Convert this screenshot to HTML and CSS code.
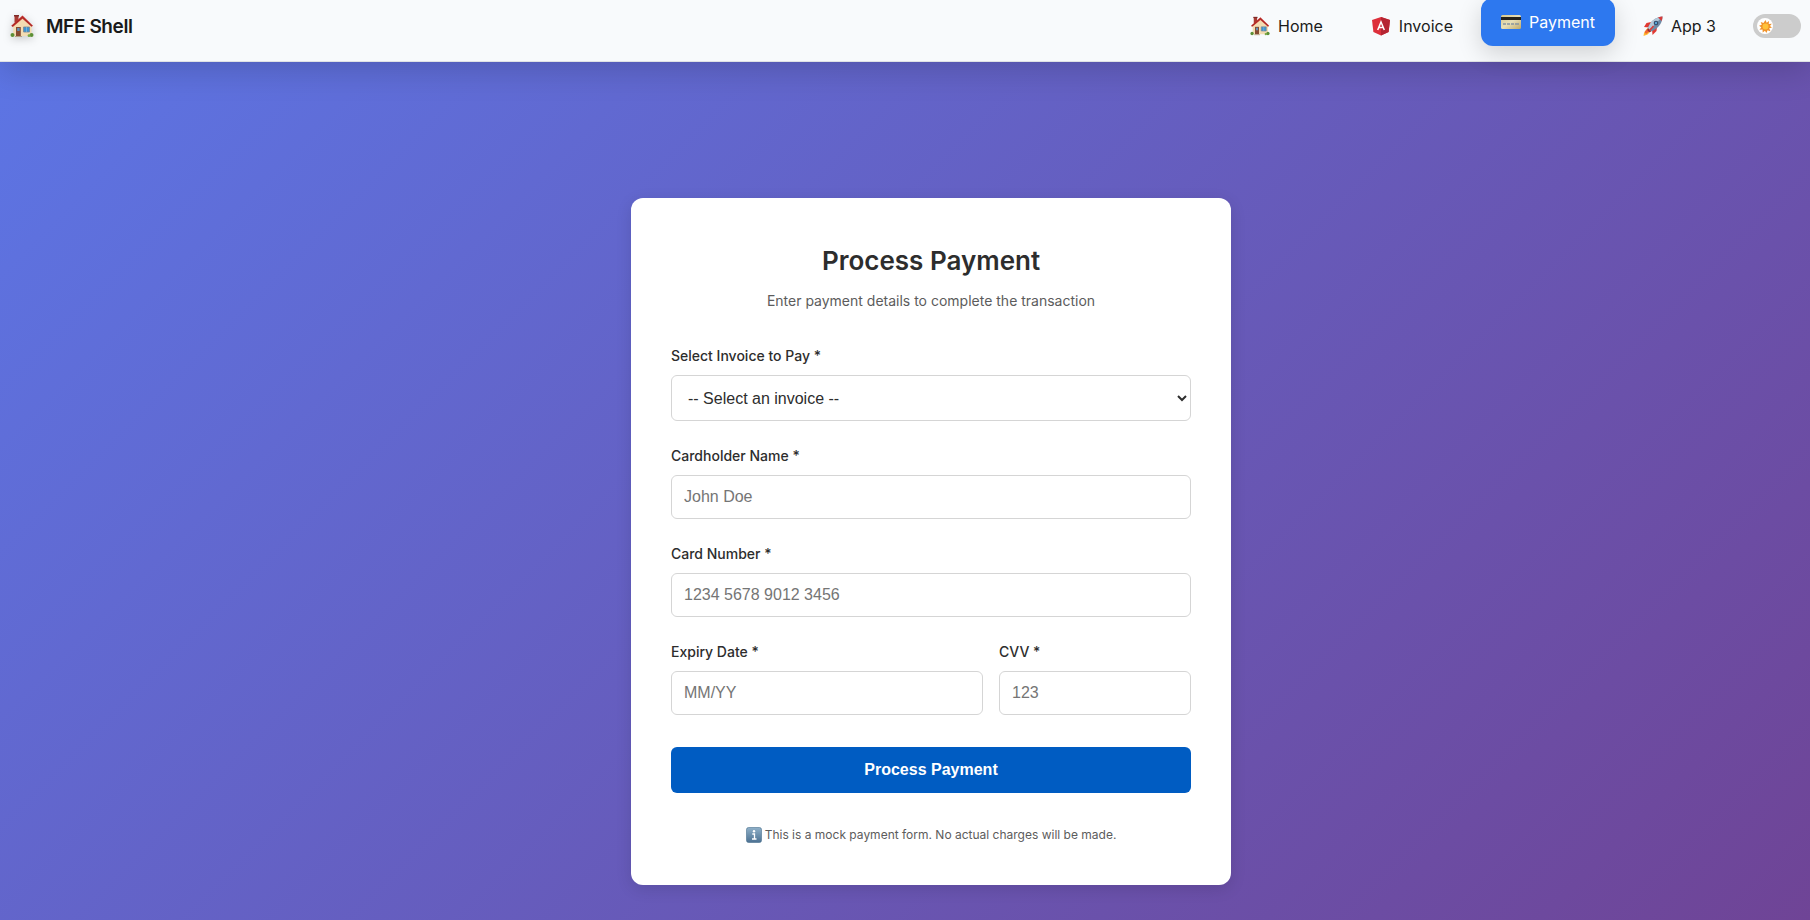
FILE: index.html
```html
<!DOCTYPE html>
<html lang="en">
<head>
<meta charset="utf-8">
<meta name="viewport" content="width=device-width, initial-scale=1">
<title>MFE Shell</title>
<link rel="stylesheet" href="styles.css">
</head>
<body>
<svg class="defs" aria-hidden="true">
  <defs>
    <linearGradient id="steel" x1="0" y1="0" x2="0" y2="1"><stop offset="0" stop-color="#8fb0c8"/><stop offset="1" stop-color="#4c7192"/></linearGradient>
    <linearGradient id="gold" x1="0" y1="0" x2="1" y2="1"><stop offset="0" stop-color="#d8c88c"/><stop offset=".5" stop-color="#e8dfb8"/><stop offset="1" stop-color="#bfa968"/></linearGradient>
    <symbol id="house" viewBox="0 0 24 24">
      <path d="M4.500 1.500h4v7h-4z" fill="#a83a32"/><path d="M4 1h5v1.500H4z" fill="#7f2a28"/>
      <path d="M3.200 11.500 12.500 3l9 8.500V22H3.200z" fill="#f3dcb2"/>
      <path d="M1.200 11.800 12.500 1.500 23 11.800l-1.500 1L12.500 4.700 2.800 13z" fill="#c9302c"/>
      <path d="M2 12.200 12.500 3.200l9.500 9" fill="none" stroke="#7d2723" stroke-width=".6"/>
      <path d="M6 13h4.800v9H6z" fill="#864b32"/><path d="M7.200 14h2.400v3H7.200z" fill="#5f8fb8"/>
      <path d="M13.500 13h6v5h-6z" fill="#3c94d2" stroke="#7b8790" stroke-width=".8"/>
      <path d="M16.500 13v5" stroke="#a9cce3" stroke-width=".5"/>
      <path d="M5 22h7v1H5z" fill="#b3a183"/>
      <circle cx="2.500" cy="21" r="2" fill="#5c8f35"/><circle cx="21.500" cy="21" r="2" fill="#5c8f35"/><circle cx="19" cy="21.700" r="1.400" fill="#78a845"/>
    </symbol>
  </defs>
</svg>
<header class="topbar">
  <a class="brand" href="#"><svg class="brand-icon" aria-hidden="true"><use href="#house"/></svg>MFE Shell</a>
  <nav class="nav" aria-label="Main">
    <a class="nav-link" href="#"><svg class="nav-icon" aria-hidden="true"><use href="#house"/></svg>Home</a>
    <a class="nav-link" href="#">
      <svg class="nav-icon" viewBox="0 0 20 20" aria-hidden="true"><path d="M10 1 19 4l-1.400 12L10 19.500 2.400 16 1 4z" fill="#dd2f3b"/><path d="M10 1 19 4l-1.400 12L10 19.500z" fill="#b52532"/><path d="M6.700 14 10 6l3.300 8M7.900 11.500h4.200" fill="none" stroke="#fff" stroke-width="1.500"/></svg>Invoice</a>
    <a class="nav-link active" href="#" aria-current="page">
      <svg class="nav-icon" viewBox="0 0 20 20" aria-hidden="true"><rect y="3" width="20" height="14" rx="1.500" fill="url(#gold)"/><path d="M0 5h20v3H0z" fill="#25221c"/><path d="M2 12h3m1 0h3m1 0h3m1 0h4" stroke="#8895a0" stroke-width="1.500"/></svg>Payment</a>
    <a class="nav-link" href="#">
      <svg class="nav-icon" viewBox="0 0 20 20" aria-hidden="true"><path d="M4.500 12 1 17l-.5 3 4-1.500L8 15z" fill="#ffb72f"/><path d="M4 13 1.500 16 3 18l4-3z" fill="#f2662e"/><path d="m8 6-4.500 1L1 11l5 .5z" fill="#e13932"/><path d="m14 11-.5 4L9.500 19 9 13.500z" fill="#e13932"/><path d="M5 12C7 6 12 1 19.500.500 19.500 8 14 13.500 8 15.500z" fill="#6f8aa5"/><path d="M5 12C7 6 12 1 19.500.500L6.500 14z" fill="#b5c8d8"/><path d="M15 1.500c1.500-.6 3-.9 4.500-1 0 1.500-.3 3-.9 4.500z" fill="#d63b3a"/><circle cx="13" cy="7" r="2.300" fill="#344a67"/><circle cx="13" cy="7" r="1.200" fill="#5ba5d7"/><path d="m5 12 3.300 3.500-2 .7-2.200-2.300z" fill="#922d37"/><path d="m6.500 14.500 4-4.500" stroke="#e13932" stroke-width="1.500"/></svg>App 3</a>
    <label class="theme">
      <input class="theme-input" type="checkbox" aria-label="Dark theme">
      <span class="theme-knob"><svg class="sun" viewBox="0 0 14 14" aria-hidden="true"><path d="m7 0 1.300 3 2.500-2-.3 3.200 3.300-.2-2 2.500L14 8l-3 1 1.300 3-3.100-.9L8 14l-1.600-2.500L4 13.500l-.2-3.200-3.300.2 2-2.600L0 6.200l3-1L1.800 2.200l3 .9z" fill="#f0922a"/><circle cx="7" cy="7" r="3.200" fill="#ffc23a"/></svg></span>
    </label>
  </nav>
</header>
<main class="page">
  <section class="card">
    <h1 class="title">Process Payment</h1>
    <p class="subtitle">Enter payment details to complete the transaction</p>
    <form class="form">
      <div class="field"><label class="label" for="invoice">Select Invoice to Pay *</label><select class="control select" id="invoice"><option>-- Select an invoice --</option></select></div>
      <div class="field"><label class="label" for="holder">Cardholder Name *</label><input class="control" id="holder" type="text" placeholder="John Doe"></div>
      <div class="field"><label class="label" for="number">Card Number *</label><input class="control" id="number" type="text" placeholder="1234 5678 9012 3456"></div>
      <div class="row">
        <div class="field wide"><label class="label" for="expiry">Expiry Date *</label><input class="control" id="expiry" type="text" placeholder="MM/YY"></div>
        <div class="field"><label class="label" for="cvv">CVV *</label><input class="control" id="cvv" type="text" placeholder="123"></div>
      </div>
      <button class="submit" type="button">Process Payment</button>
    </form>
    <p class="note"><svg class="info" viewBox="0 0 16 16" aria-hidden="true"><rect x=".5" y=".5" width="15" height="15" rx="2" fill="url(#steel)" stroke="#48708f" stroke-width=".6"/><circle cx="8" cy="4.200" r="1.200" fill="#fff"/><path d="M6.300 7H8.500v5M6 12h4.500" fill="none" stroke="#fff" stroke-width="1.300"/></svg>This is a mock payment form. No actual charges will be made.</p>
  </section>
</main>
</body>
</html>
```
FILE: styles.css
```css
* { box-sizing: border-box; }
body {
  margin: 0;
  min-height: 100vh;
  display: flex;
  flex-direction: column;
  font-family: Inter, "Liberation Sans", sans-serif;
  color: #1a1a1a;
  background: linear-gradient(135deg, #5c76e6 0%, #6f4496 100%);
}
.defs { position: absolute; width: 0; height: 0; }
.topbar {
  position: relative;
  display: flex;
  justify-content: space-between;
  align-items: center;
  height: 62px;
  padding: 0 9px 9px 10px;
  background: #f8fafc;
  border-bottom: 1px solid #dfe2e4;
  box-shadow: 0 8px 32px rgba(0, 0, 0, .17);
}
.brand {
  display: flex;
  align-items: center;
  gap: 12px;
  color: #1a1a1a;
  font-size: 19px;
  font-weight: 600;
  letter-spacing: -0.4px;
  text-decoration: none;
}
.brand-icon { width: 24px; height: 24px; filter: drop-shadow(0 2px 4px rgba(0, 0, 0, .2)); }
.nav { display: flex; align-items: center; gap: 8px; }
.nav-link {
  display: flex;
  align-items: center;
  gap: 8px;
  height: 48px;
  padding: 0 20px;
  border-radius: 12px;
  color: #1a1a1a;
  font-size: 16px;
  font-weight: 400;
  text-decoration: none;
}
.nav-icon { width: 20px; height: 20px; }
.active {
  color: #fff;
  background: #2d78ef;
  box-shadow: 0 8px 24px rgba(0, 0, 0, .16);
  transform: translateY(-4px);
}
.theme { position: relative; display: block; width: 48px; height: 24px; margin-left: 9px; }
.theme-input { appearance: none; display: block; width: 100%; height: 100%; margin: 0; border-radius: 12px; background: #ccc; }
.theme-knob {
  position: absolute;
  top: 4px;
  left: 4px;
  display: grid;
  place-items: center;
  width: 16px;
  height: 16px;
  border-radius: 50%;
  background: #fff;
}
.sun { width: 13px; height: 13px; }
.page { flex: 1; padding: 136px 32px 36px 84px; }
.card {
  max-width: 600px;
  margin: 0 auto;
  padding: 40px;
  border-radius: 12px;
  background: #fff;
  box-shadow: 0 4px 16px rgba(0, 0, 0, .12);
}
.title { margin: 5px 0 10px; color: #2d2d2d; font-size: 26px; font-weight: 600; line-height: 36px; text-align: center; }
.subtitle { margin: 0 0 32px; color: #5c5c5c; font-size: 14px; line-height: 24px; text-align: center; }
.field { flex: 8; min-width: 0; margin-bottom: 24px; }
.wide { flex: 13; }
.label { display: block; margin-bottom: 8px; color: #2d2d2d; font-size: 14px; font-weight: 500; line-height: 22px; }
.control {
  display: block;
  width: 100%;
  height: 44px;
  padding: 0 12px;
  border: 1px solid #d5d5d5;
  border-radius: 6px;
  background: #fff;
  color: #2d2d2d;
  font: 16px "Liberation Sans", Arial, sans-serif;
}
.control::placeholder { color: #757575; }
.select { height: 46px; }
.row { display: flex; gap: 16px; }
.submit {
  display: block;
  width: 100%;
  height: 46px;
  margin-top: 8px;
  border: 0;
  border-radius: 6px;
  background: #005cc2;
  color: #fff;
  font: bold 16px "Liberation Sans", Arial, sans-serif;
}
.note { display: flex; justify-content: center; align-items: center; gap: 3px; margin: 32px 0 0; color: #5c5c5c; font-size: 12px; line-height: 20px; }
.info { width: 16px; height: 16px; }
```
